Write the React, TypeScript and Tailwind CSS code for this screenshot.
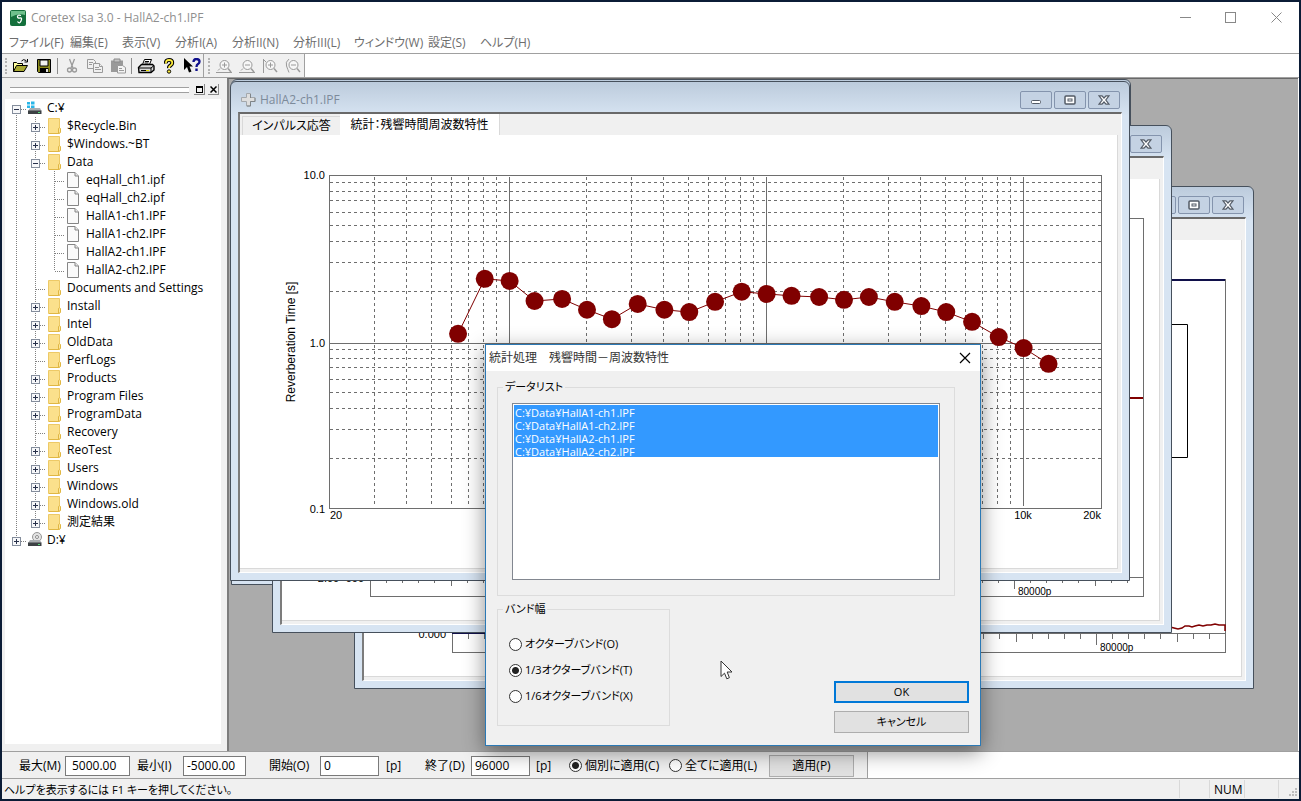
import type { ReactNode } from "react";
import clsx from "clsx";

type NodeKind = "disk" | "cd" | "folder" | "file";

interface TreeNode {
  label: string;
  kind: NodeKind;
  level: 0 | 1 | 2;
  toggle?: "plus" | "minus";
  last?: boolean;
}

const tree: TreeNode[] = [
  { label: "C:¥", kind: "disk", level: 0, toggle: "minus" },
  { label: "$Recycle.Bin", kind: "folder", level: 1, toggle: "plus" },
  { label: "$Windows.~BT", kind: "folder", level: 1, toggle: "plus" },
  { label: "Data", kind: "folder", level: 1, toggle: "minus" },
  { label: "eqHall_ch1.ipf", kind: "file", level: 2 },
  { label: "eqHall_ch2.ipf", kind: "file", level: 2 },
  { label: "HallA1-ch1.IPF", kind: "file", level: 2 },
  { label: "HallA1-ch2.IPF", kind: "file", level: 2 },
  { label: "HallA2-ch1.IPF", kind: "file", level: 2 },
  { label: "HallA2-ch2.IPF", kind: "file", level: 2, last: true },
  { label: "Documents and Settings", kind: "folder", level: 1 },
  { label: "Install", kind: "folder", level: 1, toggle: "plus" },
  { label: "Intel", kind: "folder", level: 1, toggle: "plus" },
  { label: "OldData", kind: "folder", level: 1, toggle: "plus" },
  { label: "PerfLogs", kind: "folder", level: 1 },
  { label: "Products", kind: "folder", level: 1, toggle: "plus" },
  { label: "Program Files", kind: "folder", level: 1, toggle: "plus" },
  { label: "ProgramData", kind: "folder", level: 1, toggle: "plus" },
  { label: "Recovery", kind: "folder", level: 1 },
  { label: "ReoTest", kind: "folder", level: 1, toggle: "plus" },
  { label: "Users", kind: "folder", level: 1, toggle: "plus" },
  { label: "Windows", kind: "folder", level: 1, toggle: "plus" },
  { label: "Windows.old", kind: "folder", level: 1, toggle: "plus" },
  { label: "測定結果", kind: "folder", level: 1, toggle: "plus", last: true },
  { label: "D:¥", kind: "cd", level: 0, toggle: "plus", last: true },
];

const menus = [
  "ファイル(F)",
  "編集(E)",
  "表示(V)",
  "分析I(A)",
  "分析II(N)",
  "分析III(L)",
  "ウィンドウ(W)",
  "設定(S)",
  "ヘルプ(H)",
];

// 1/3 octave bands: [centre frequency in Hz, reverberation time in s]
const bands: [number, number][] = [
  [63, 1.12], [80, 2.39], [100, 2.32], [125, 1.76], [160, 1.81], [200, 1.56],
  [250, 1.37], [315, 1.69], [400, 1.56], [500, 1.51], [630, 1.74], [800, 2.0],
  [1000, 1.94], [1250, 1.89], [1600, 1.86], [2000, 1.79], [2500, 1.86], [3150, 1.74],
  [4000, 1.64], [5000, 1.51], [6300, 1.32], [8000, 1.07], [10000, 0.92], [12500, 0.74],
];

const files = ["C:¥Data¥HallA1-ch1.IPF", "C:¥Data¥HallA1-ch2.IPF", "C:¥Data¥HallA2-ch1.IPF", "C:¥Data¥HallA2-ch2.IPF"];

/* ---------- tree ---------- */

const Guide = ({ up, down, right, toggle }: { up?: boolean; down?: boolean; right?: boolean; toggle?: string }) => (
  <svg width="19" height="18" className="shrink-0" shapeRendering="crispEdges" fill="none">
    {up && <path d="M9.5 0V10" stroke="#808080" strokeDasharray="1 1" />}
    {down && <path d="M9.5 10V18" stroke="#808080" strokeDasharray="1 1" />}
    {right && <path d="M10 10.5H19" stroke="#808080" strokeDasharray="1 1" />}
    {toggle && (
      <>
        <rect x="5.5" y="6.5" width="8" height="8" fill="#f6f7f9" stroke="#848d9c" />
        <path d="M7 10.5H12" stroke="#27304a" />
        {toggle === "plus" && <path d="M9.5 8V13" stroke="#27304a" />}
      </>
    )}
  </svg>
);

const NodeIcon = ({ kind }: { kind: NodeKind }) => {
  if (kind === "folder")
    return (
      <svg width="14" height="18" className="ml-[3px] shrink-0">
        <path d="M.5 1.5h11v15H.5z" fill="#fbe08c" stroke="#edc966" />
        <path d="M1 16.5h9.500V11.500q1.500-1.500 2 0V15.500l-2 1" fill="#fce79f" stroke="#e0b743" />
      </svg>
    );
  if (kind === "file")
    return (
      <svg width="14" height="18" className="ml-[3px] shrink-0">
        <path d="M.5 1.500h7.500l3.500 3.500v11.500H.5z" fill="#fafafa" stroke="#868686" />
        <path d="M8 1.500v3.500h3.500" fill="#e8e8e8" stroke="#868686" />
      </svg>
    );
  return (
    <svg width="15" height="18" className="ml-[1px] shrink-0">
      {kind === "disk" ? (
        <path d="M0 3h3v2.500H0zM4 2.500h3.500v3H4zM0 6.500h3V9H0zM4 6.500h3.500v3H4z" fill="#29b6e8" />
      ) : (
        <>
          <circle cx="10" cy="6" r="4.500" fill="#e4e4e4" stroke="#969696" />
          <circle cx="10" cy="6" r="1.500" fill="#fff" stroke="#8a8a8a" />
        </>
      )}
      <path d="M3 9h10l1.500 3H1z" fill="#a9adb0" />
      <path d="M1 11.500h13.500v3.500H1z" fill="#3d4144" />
      <path d="M11 13h2v1h-2z" fill="#59e07a" />
    </svg>
  );
};

const TreeRow = ({ node, first }: { node: TreeNode; first: boolean }) => (
  <li role="treeitem" aria-level={node.level + 1} className="flex h-[18px] items-center whitespace-nowrap">
    {node.level > 0 && <Guide up down />}
    {node.level > 1 && <Guide up down />}
    <Guide up={!first} down={!node.last} right toggle={node.toggle} />
    <NodeIcon kind={node.kind} />
    <span className="ml-[5px] leading-[18px]">{node.label}</span>
  </li>
);

const Sidebar = () => (
  <aside className="flex w-[225px] shrink-0 flex-col bg-[#f0f0f0] pr-[6px] pb-[7px] pl-[3px]">
    <div className="flex h-[21px] items-center gap-[3px] pt-[2px] pr-[2px] pl-[5px]">
      <div className="mr-[2px] h-[6px] flex-1 border-y border-[#a0a0a0] bg-white" />
      <button aria-label="最大化" className="grid size-[11px] place-items-center border-r border-b border-[#8a8a8a]">
        <span className="size-[7px] border border-t-2 border-black" />
      </button>
      <button aria-label="閉じる" className="grid size-[11px] place-items-center border-r border-b border-[#8a8a8a]">
        <svg width="7" height="7"><path d="M.5.5l6 6M6.500.5l-6 6" stroke="#000" strokeWidth="1.500" /></svg>
      </button>
    </div>
    <ul role="tree" className="flex-1 bg-white pl-[2px]">
      {tree.map((node, i) => (
        <TreeRow key={node.label} node={node} first={i === 0} />
      ))}
    </ul>
  </aside>
);

/* ---------- toolbar ---------- */

const ToolButton = ({ label, children }: { label: string; children: ReactNode }) => (
  <button aria-label={label} className="grid h-[22px] w-[23px] place-items-center">
    <svg width="18" height="16" fill="none">{children}</svg>
  </button>
);

const Separator = () => <div className="mx-[2px] h-4 w-px bg-[#8c8c8c]" />;

const Grip = () => <div className="mr-[2px] ml-[3px] h-4 w-[2px] border-l-2 border-dotted border-[#b4b4b4]" />;

const ZoomGlyph = ({ plus, range, base }: { plus?: boolean; range?: "bar" | "paren"; base?: boolean }) => (
  <g stroke="#9a9a9a">
    <circle cx="9.500" cy="7" r="4.500" fill="#f7f7f7" />
    <path d="M7 7h5" />
    {plus && <path d="M9.500 4.500v5" />}
    <path d="M13 10.500l3 3.500" strokeWidth="1.500" />
    {base && <path d="M1 14.500h16M3 12.500l2-2" />}
    {range === "bar" && <path d="M2.500 1v14M3 2l2 2" />}
    {range === "paren" && <path d="M5 1q-4 3-2.500 7t2.500 6.500" />}
  </g>
);

const Toolbar = () => (
  <div className="flex h-[25px] border-y border-[#a0a0a0] bg-white">
    <div className="flex items-center border-r border-[#a0a0a0] bg-[#f0f0f0]">
      <Grip />
      <ToolButton label="開く">
        <path d="M1.500 13.500v-9h3l1 1h5v2" fill="#ffff9c" stroke="#000" />
        <path d="M1.500 13.500l3-6h11l-3.500 6z" fill="#a8a832" stroke="#000" />
        <path d="M9.500 3q2-2.500 4.500-.500l1 1M15.500 1v3h-3" stroke="#000" />
      </ToolButton>
      <ToolButton label="保存">
        <path d="M2.500 1.500h13v13h-12l-1-1z" fill="#8a8a1c" stroke="#000" />
        <path d="M5 2h8v6H5z" fill="#f0f0f0" stroke="#000" />
        <path d="M5 10h8.500v4.500H5z" fill="#000" />
        <path d="M11 11h2v3h-2z" fill="#ddd" />
      </ToolButton>
      <Separator />
      <ToolButton label="切り取り">
        <g stroke="#9a9a9a" strokeWidth="1.300">
          <path d="M6.500 1l3.500 9M11.500 1L8 10" />
          <circle cx="6.500" cy="12" r="2" />
          <circle cx="11.500" cy="12" r="2" />
        </g>
      </ToolButton>
      <ToolButton label="コピー">
        <g stroke="#9a9a9a" fill="#f0f0f0">
          <path d="M1.500 1.500h6l2 2v7h-8z" />
          <path d="M7.500 5.500h6l3 3v6h-9z" />
          <path d="M3 4.500h4M3 6.500h3M9 9.500h4M9 11.500h6M13.500 5.500v3h3" />
        </g>
      </ToolButton>
      <ToolButton label="貼り付け">
        <path d="M2 2.500h12V14H2z" fill="#9a9a9a" />
        <path d="M5 1h6v3H5z" fill="#c4c4c4" stroke="#8a8a8a" />
        <path d="M8.500 7.500h5l3 2v5.500h-8z" fill="#f4f4f4" stroke="#9a9a9a" />
        <path d="M10 10.500h3M10 12.500h5" stroke="#9a9a9a" />
      </ToolButton>
      <Separator />
      <ToolButton label="印刷">
        <path d="M5.500 6.500l2-5h7l-2 5" fill="#fff" stroke="#000" />
        <path d="M8 3.500h4M7.500 5h4" stroke="#000" />
        <path d="M1.500 9.500l3-3h11l1.500 1.500v4l-3 2.500h-12z" fill="#d8d8d8" stroke="#000" strokeWidth="1.400" />
        <path d="M2 10h12v4M14 10l2.500-2M4 12.500h8" stroke="#000" />
        <path d="M9 12.500h3" stroke="#e8e000" />
      </ToolButton>
      <ToolButton label="ヘルプ">
        <path d="M6 5.500q-.5-3.500 3-3.500t3.200 3q0 1.500-1.700 2.500T9 10" stroke="#000" strokeWidth="4" />
        <path d="M6 5.500q-.5-3.500 3-3.500t3.200 3q0 1.500-1.700 2.500T9 10" stroke="#ffee3c" strokeWidth="1.800" />
        <circle cx="9" cy="13.500" r="1.700" fill="#ffee3c" stroke="#000" />
      </ToolButton>
      <ToolButton label="ポップヒント">
        <path d="M1 0v12l3-3 2 5.500 2.500-1-2-5H10z" fill="#000" />
        <path d="M10.500 4q0-3 3-3t3 2.800q0 1.300-1.500 2.200T13.500 9" stroke="#10108c" strokeWidth="2.300" />
        <path d="M12.300 10.500h2.400v2.500h-2.400z" fill="#10108c" />
      </ToolButton>
    </div>
    <div className="flex items-center border-r border-[#a0a0a0] bg-[#f0f0f0] pl-[1px]">
      <Grip />
      <ToolButton label="縦拡大"><ZoomGlyph plus base /></ToolButton>
      <ToolButton label="縦縮小"><ZoomGlyph base /></ToolButton>
      <ToolButton label="横拡大"><ZoomGlyph plus range="bar" /></ToolButton>
      <ToolButton label="横縮小"><ZoomGlyph range="paren" /></ToolButton>
    </div>
  </div>
);

/* ---------- plots ---------- */

const LEFT = 90;
const TOP = 40;
const BOTTOM = 373;
const RIGHT = 861;
const xOf = (hz: number) => LEFT + Math.log10(hz / 20) * 257;
const yOf = (s: number) => TOP + (1 - Math.log10(s)) * 167;

const minorHz = [30, 40, 50, 60, 70, 80, 90, 200, 300, 400, 500, 600, 700, 800, 900,
  2000, 3000, 4000, 5000, 6000, 7000, 8000, 9000];
const minorSec = [9, 8, 7, 6, 5, 4, 3, 2, 0.9, 0.8, 0.7, 0.6, 0.5, 0.4, 0.3, 0.2];

const ReverbPlot = () => (
  <svg viewBox="0 0 877 434" className="block w-full font-['Liberation_Sans',sans-serif] text-[11px]">
    <g shapeRendering="crispEdges" stroke="#6e6e6e" fill="none">
      {minorHz.map((f) => (
        <path key={f} d={`M${Math.floor(xOf(f)) - 0.5} ${TOP + 2}V${BOTTOM - 4}`} strokeDasharray="3 3" />
      ))}
      {minorSec.map((s) => (
        <path key={s} d={`M${LEFT} ${Math.floor(yOf(s)) + 0.5}H${RIGHT}`} strokeDasharray="3 3" />
      ))}
      {[100, 1000, 10000].map((f) => (
        <path key={f} d={`M${Math.floor(xOf(f)) + 0.5} ${TOP + 2}V${BOTTOM - 2}`} />
      ))}
      <path d={`M${LEFT} ${TOP + 168.5}H${RIGHT}`} />
      <rect x={LEFT - 0.5} y={TOP + 0.5} width={RIGHT - LEFT + 1} height={BOTTOM - TOP} />
    </g>
    <polyline points={bands.map(([f, s]) => `${xOf(f)},${yOf(s)}`).join(" ")} fill="none" stroke="#800000" />
    {bands.map(([f, s]) => (
      <circle key={f} cx={xOf(f)} cy={yOf(s)} r="9" fill="#800000" />
    ))}
    <g textAnchor="end">
      <text x="85" y="44">10.0</text>
      <text x="85" y="212">1.0</text>
      <text x="85" y="378">0.1</text>
      <text x={RIGHT} y="384">20k</text>
    </g>
    <text x={LEFT} y="384">20</text>
    <text x="783" y="384" textAnchor="middle">10k</text>
    <text transform="translate(55 207) rotate(-90)" textAnchor="middle" className="text-[12px]">Reverberation Time [s]</text>
  </svg>
);

interface ImpulsePlotProps {
  height: number;
  axis: number;
  label: string;
  children: ReactNode;
}

const ImpulsePlot = ({ height, axis, label, children }: ImpulsePlotProps) => (
  <svg viewBox={`0 0 877 ${height}`} className="block w-full font-['Liberation_Sans',sans-serif] text-[11px]">
    <g shapeRendering="crispEdges" stroke="#6e6e6e" fill="none">
      <path d={`M88.5 39.500H861.500V${axis + 19.5}H88.500zM88 ${axis + 0.5}H861`} />
      {Array.from({ length: 48 }, (_, i) => {
        const n = i + 1;
        const len = n % 10 === 0 ? 12 : n % 5 === 0 ? 9 : 6;
        return <path key={n} d={`M${Math.round(88 + n * 16.1) + 0.5} ${axis}v${len}`} />;
      })}
    </g>
    <text x="82" y={axis + 5} textAnchor="end">{label}</text>
    <text x="736" y={axis + 18} className="text-[10px]">80000p</text>
    {children}
  </svg>
);

/* ---------- MDI child windows ---------- */

const CaptionButton = ({ label, children }: { label: string; children: ReactNode }) => (
  <button aria-label={label} className="grid h-[18px] w-8 place-items-center rounded-[2px] border border-[#8494ad] bg-[#c4d2e3]">
    <svg width="12" height="10" fill="#fff" stroke="#535b66">{children}</svg>
  </button>
);

interface ChildWindowProps {
  title: string;
  className: string;
  children?: ReactNode;
  tabs?: ReactNode;
}

const ChildWindow = ({ title, className, children, tabs }: ChildWindowProps) => (
  <section
    className={clsx(
      "absolute flex w-[900px] flex-col rounded-t-[6px] border border-[#46505c] bg-[#d7e4f2] bg-[linear-gradient(#bccbdc,#d7e4f2_34px)] px-[7px] pb-[7px]",
      className,
    )}
  >
    <header className="flex h-[30px] shrink-0 items-center gap-[2px] pt-[6px] pr-[2px] pl-[2px] text-[#7c8a9a]">
      <svg width="18" height="16" className="shrink-0">
        <path d="M6.500 1.500h4v4h4.500v4h-4.500v4.500h-4V9.500H1.500v-4h5z" fill="#dedede" stroke="#a4a8ac" />
        <path d="M10.500 2v4M15 6v3.500h-4.500v4.500H7" fill="none" stroke="#7f8488" />
      </svg>
      <h2 className="flex-1">{title}</h2>
      <CaptionButton label="最小化"><rect x="1.500" y="5.500" width="9" height="3" rx="1" /></CaptionButton>
      <CaptionButton label="最大化">
        <rect x="1" y="1" width="10" height="8" rx="1" strokeWidth="1.500" />
        <rect x="4" y="4" width="4" height="2" />
      </CaptionButton>
      <CaptionButton label="閉じる">
        <path d="M1 .8h3l2 2.200L8 .8h3L7.800 5 11 9.200H8L6 7 4 9.200H1L4.200 5z" strokeWidth="1.200" />
      </CaptionButton>
    </header>
    <div className="flex min-h-0 flex-1 flex-col border-t-2 border-r border-b border-l-2 border-t-[#696969] border-r-white border-b-white border-l-[#7c7c7c] bg-[#f0f0f0]">
      <div className="flex h-[21px] shrink-0 items-end pl-[2px]">{tabs}</div>
      <div className="mr-[3px] mb-[3px] min-h-0 flex-1 overflow-hidden border-r border-b border-[#d9d9d9] bg-white">{children}</div>
    </div>
  </section>
);

const Workspace = () => (
  <main className="relative mr-[1px] flex-1 overflow-hidden border-t border-l-2 border-t-[#696969] border-l-[#7c7c7c] bg-[#ababab]">
    <ChildWindow title="HallA1-ch1.IPF" className="top-0 left-[2px] h-[506px]" />
    <ChildWindow title="HallA1-ch2.IPF" className="top-[107px] left-[125px] h-[503px]">
      <ImpulsePlot height={448} axis={393} label="0.000">
        <path d="M88 40H861M88 393H200" stroke="#10104a" strokeWidth="2" />
        <path d="M600 84.500H823.500V217.500H600" fill="none" stroke="#000" />
        <path
          d="M700 387L806 387l4 1 4 1 4-1 3-2 4 0 3 1 3-1 4-1 4 1 4-1 4 0 4-1 4 1h3l3 0v6"
          fill="none"
          stroke="#800000"
          strokeWidth="1.500"
        />
      </ImpulsePlot>
    </ChildWindow>
    <ChildWindow title="HallA2-ch2.IPF" className="top-[46px] left-[43px] h-[508px]">
      <ImpulsePlot height={448} axis={398} label="2.00+000">
        <path d="M88 219H861" stroke="#800000" strokeWidth="2" />
      </ImpulsePlot>
    </ChildWindow>
    <ChildWindow
      title="HallA2-ch1.IPF"
      className="top-[2px] left-[1px] h-[500px]"
      tabs={
        <>
          <button className="h-[19px] w-[98px] border-t border-l border-[#d9d9d9] text-black">インパルス応答</button>
          <button className="h-[21px] w-40 border-r border-[#d9d9d9] bg-white text-black">統計：残響時間周波数特性</button>
        </>
      }
    >
      <ReverbPlot />
    </ChildWindow>
  </main>
);

/* ---------- form parts ---------- */

const Radio = ({ name, label, checked }: { name: string; label: string; checked?: boolean }) => (
  <label className="flex items-center gap-[3px] whitespace-nowrap">
    <input
      type="radio"
      name={name}
      defaultChecked={checked}
      className="size-[13px] shrink-0 appearance-none rounded-full border border-[#333] bg-white checked:bg-[radial-gradient(circle,#222_3px,#fff_4px)]"
    />
    {label}
  </label>
);

const NumberField = ({ id, label, value, labelWidth, width }: { id: string; label: string; value: string; labelWidth: string; width: string }) => (
  <>
    <label htmlFor={id} className={clsx("whitespace-nowrap", labelWidth)}>{label}</label>
    <input id={id} defaultValue={value} className={clsx("h-5 border border-[#7a7a7a] bg-white", width)} />
  </>
);

const RangeBar = () => (
  <div className="flex h-7 border-y border-[#a0a0a0] bg-white">
    <form className="flex w-[866px] items-center border-r border-[#a0a0a0] bg-[#f0f0f0] pt-[1px] pl-[17px]">
      <NumberField id="max" label="最大(M)" value="5000.00" labelWidth="w-[46px]" width="w-[65px] px-[6px]" />
      <span className="w-[7px]" />
      <NumberField id="min" label="最小(I)" value="-5000.00" labelWidth="w-[46px]" width="w-[63px] px-[3px]" />
      <span className="w-[23px]" />
      <NumberField id="start" label="開始(O)" value="0" labelWidth="w-[51px]" width="w-[59px] px-[3px]" />
      <span className="w-[46px] pl-[7px]">[p]</span>
      <NumberField id="end" label="終了(D)" value="96000" labelWidth="w-[46px]" width="w-[59px] px-[3px]" />
      <span className="w-[39px] pl-[6px]">[p]</span>
      <div className="w-[100px]"><Radio name="scope" label="個別に適用(C)" checked /></div>
      <div className="w-[100px]"><Radio name="scope" label="全てに適用(L)" /></div>
      <button type="button" className="h-[22px] w-[85px] border border-[#adadad] bg-[#e1e1e1]">適用(P)</button>
    </form>
  </div>
);

const StatusBar = () => (
  <footer className="flex h-5 items-center bg-[#f0f0f0] pl-[2px]">
    <span className="flex-1 pt-[2px] text-[11px]">ヘルプを表示するには F1 キーを押してください。</span>
    <span className="h-[18px] w-[30px] border-l border-[#d9d9d9]" />
    <span className="h-[18px] w-9 border-x border-[#d9d9d9] pt-[1px] pl-1 leading-[18px]">NUM</span>
    <span className="h-[18px] w-[34px] border-r border-[#d9d9d9]" />
    <svg width="20" height="20" fill="#bdbdbd">
      <path d="M16 9h2v2h-2zM13 12h2v2h-2zM16 12h2v2h-2zM10 15h2v2h-2zM13 15h2v2h-2zM16 15h2v2h-2z" />
    </svg>
  </footer>
);

const StatsDialog = () => (
  <div
    role="dialog"
    aria-labelledby="stats-title"
    className="absolute top-[342px] left-[483px] w-[496px] border border-[#2b79b5] bg-[#f0f0f0] shadow-[0_6px_20px_rgba(0,0,0,0.45)]"
  >
    <header className="flex h-[26px] items-center justify-between bg-white pr-[9px] pl-[3px]">
      <h2 id="stats-title" className="text-[#333]">統計処理　残響時間－周波数特性</h2>
      <button aria-label="閉じる">
        <svg width="12" height="12"><path d="M1 1l10 10M11 1L1 11" stroke="#000" strokeWidth="1.200" /></svg>
      </button>
    </header>
    <form className="flex flex-col gap-1 pt-[7px] pr-[11px] pb-3 pl-[11px] text-[11px]">
      <fieldset className="mr-[14px] h-[218px] border border-[#dcdcdc] px-[14px]">
        <legend className="-ml-[9px] h-[18px] px-[2px] leading-[18px]">データリスト</legend>
        <select
          multiple
          aria-label="データリスト"
          defaultValue={files}
          className="mt-[7px] block h-[177px] w-full overflow-hidden border border-[#828790] bg-white p-[1px] text-[11px]"
        >
          {files.map((file) => (
            <option
              key={file}
              value={file}
              className="h-[13px] min-h-0 p-0 pl-[1px] text-[11px] leading-[13px] checked:bg-[linear-gradient(#3399ff,#3399ff)] checked:[-webkit-text-fill-color:white]"
            >
              {file}
            </option>
          ))}
        </select>
      </fieldset>
      <div className="flex items-end justify-between">
        <fieldset className="mb-[7px] h-[126px] w-[173px] border border-[#dcdcdc] pl-[11px]">
          <legend className="-ml-[6px] h-[18px] px-[2px] leading-[18px]">バンド幅</legend>
          <div className="flex flex-col gap-2 pt-[17px] leading-[18px]">
            <Radio name="band" label="オクターブバンド(O)" />
            <Radio name="band" label="1/3オクターブバンド(T)" checked />
            <Radio name="band" label="1/6オクターブバンド(X)" />
          </div>
        </fieldset>
        <div className="flex w-[135px] flex-col gap-2">
          <button type="button" className="h-[22px] border-2 border-[#0078d7] bg-[#e1e1e1]">OK</button>
          <button type="button" className="h-[22px] border border-[#adadad] bg-[#e1e1e1]">キャンセル</button>
        </div>
      </div>
    </form>
  </div>
);

export default function App() {
  return (
    <div className="relative flex min-h-screen flex-col overflow-hidden border-2 border-[#0b1c36] bg-white font-['Open_Sans','Noto_Sans_CJK_JP',sans-serif] text-[12px] text-black [font-feature-settings:'palt']">
      <header className="flex h-[31px] items-center pl-2 text-[#8f8f8f]">
        <svg width="16" height="16" className="mr-[5px]">
          <rect width="16" height="16" rx="2" fill="#14703c" />
          <path d="M1 1h14v4q-7-2-14 2z" fill="#6fc08c" />
          <path d="M11 5.500q-3.500-1-3.500 1t2.500 1.500 1 3-3.500.500" fill="none" stroke="#fff" strokeWidth="1.300" />
        </svg>
        <h1 className="flex-1">Coretex Isa 3.0 - HallA2-ch1.IPF</h1>
        <button aria-label="最小化" className="grid h-[30px] w-[45px] place-items-center">
          <svg width="11" height="11"><path d="M0 5.500h11" stroke="#888" /></svg>
        </button>
        <button aria-label="最大化" className="grid h-[30px] w-[45px] place-items-center">
          <svg width="11" height="11"><rect x=".5" y=".5" width="10" height="10" fill="none" stroke="#888" /></svg>
        </button>
        <button aria-label="閉じる" className="grid h-[30px] w-[46px] place-items-center">
          <svg width="11" height="11"><path d="M.5.5l10 10M10.500.5l-10 10" stroke="#888" /></svg>
        </button>
      </header>
      <nav className="grid h-5 shrink-0 grid-cols-[61px_52px_53px_57px_61px_61px_74px_52px_60px] pl-[7px] text-[#6d6d6d]">
        {menus.map((menu) => (
          <button key={menu} className="text-left whitespace-nowrap">{menu}</button>
        ))}
      </nav>
      <Toolbar />
      <div className="flex flex-1">
        <Sidebar />
        <Workspace />
      </div>
      <RangeBar />
      <StatusBar />
      <StatsDialog />
      <svg width="14" height="21" className="pointer-events-none absolute top-[658px] left-[718px]">
        <path d="M1 1v15.500l3.500-3.300 2.300 5.600 2.600-1.100L7.200 12H12z" fill="#fff" stroke="#333" />
      </svg>
    </div>
  );
}
